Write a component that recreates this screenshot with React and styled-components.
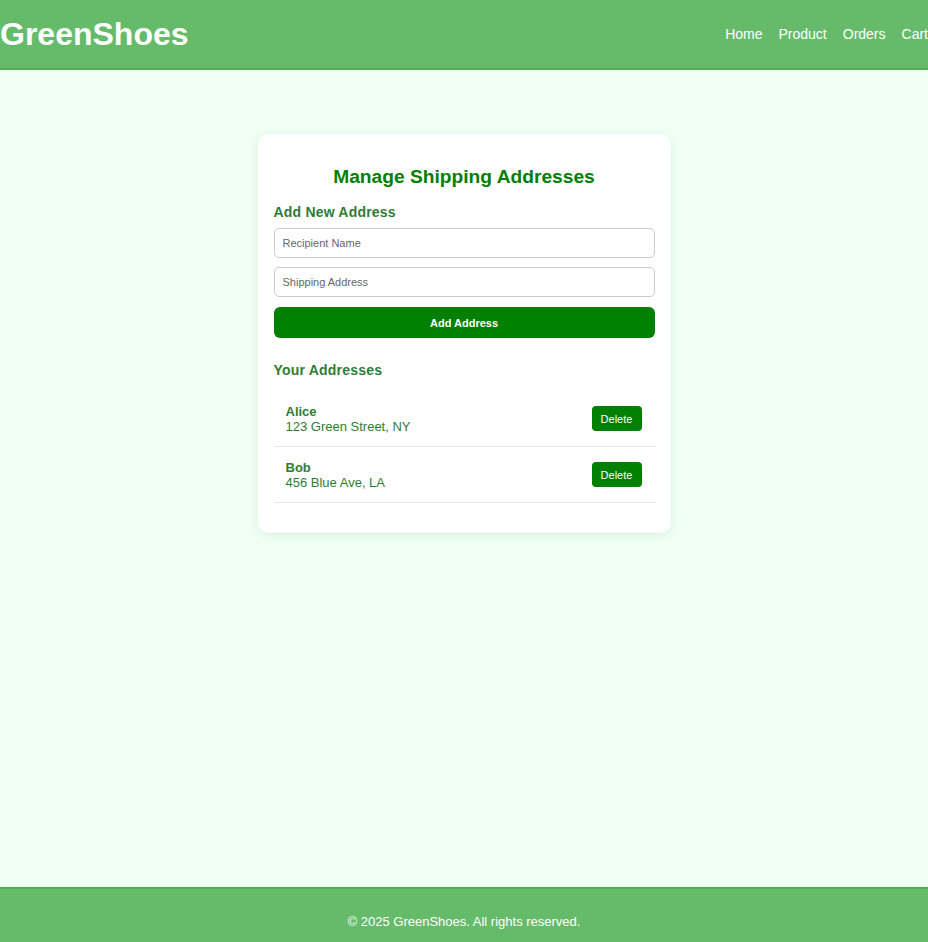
import React from "react";
import styled, { createGlobalStyle } from "styled-components";

const Global = createGlobalStyle`
  html, body { margin: 0; padding: 0; }
  body {
    background: #f0fff4;
    font-family: "Liberation Sans", Arial, sans-serif;
    overflow-x: hidden;
  }
  * { box-sizing: border-box; }
`;

const Header = styled.header`
  display: flex;
  align-items: center;
  justify-content: space-between;
  height: 70px;
  background: #66bb6a;
  border-bottom: 2px solid #4caf50;
`;

const Logo = styled.h1`
  margin: 0;
  color: #fff;
  font-size: 32px;
  font-weight: bold;
`;

const Nav = styled.nav`
  display: flex;
  gap: 16px;
  padding-bottom: 1px;
`;

const NavLink = styled.a`
  color: #fff;
  font-size: 14px;
  text-decoration: none;
`;

const Main = styled.main`
  min-height: 817px;
  display: flex;
  justify-content: center;
  padding-top: 64px;
`;

const Card = styled.section`
  width: 413px;
  align-self: flex-start;
  background: #fff;
  border-radius: 10px;
  box-shadow: 0 2px 10px rgba(0, 128, 0, 0.1);
  padding: 32px 16px 30px;
`;

const Title = styled.h2`
  margin: 0 0 16px;
  text-align: center;
  color: #008000;
  font-size: 19.2px;
  font-weight: bold;
`;

const SectionTitle = styled.h3`
  margin: 0 0 8px;
  color: #2e7d32;
  font-size: 14px;
  font-weight: bold;
  letter-spacing: 0.2px;
`;

const Form = styled.form`
  display: flex;
  flex-direction: column;
  gap: 9px;
  margin-bottom: 24px;
`;

const Input = styled.input`
  height: 30px;
  padding: 0 8px;
  border: 1px solid #ccc;
  border-radius: 5px;
  font-family: inherit;
  font-size: 11px;
  color: #333;
  &::placeholder { color: #666; }
`;

const PrimaryButton = styled.button`
  height: 31px;
  margin-top: 1px;
  border: none;
  border-radius: 6px;
  background: #008000;
  color: #fff;
  font-family: inherit;
  font-size: 11px;
  font-weight: bold;
`;

const List = styled.ul`
  list-style: none;
  margin: 13px 0 0;
  padding: 0;
`;

const Item = styled.li`
  display: flex;
  align-items: center;
  justify-content: space-between;
  height: 56px;
  padding: 0 13px 0 12px;
  border-bottom: 1px solid #e8e8e8;
`;

const Info = styled.div`
  color: #2e7d32;
  font-size: 13px;
  line-height: 15px;
`;

const Name = styled.div`
  font-weight: bold;
`;

const DeleteButton = styled.button`
  width: 50px;
  height: 25px;
  border: none;
  border-radius: 4px;
  background: #008000;
  color: #fff;
  font-family: inherit;
  font-size: 11px;
`;

const Footer = styled.footer`
  background: #66bb6a;
  border-top: 2px solid #4caf50;
  padding: 25px 0 24px;
  text-align: center;
  color: #fff;
  font-size: 13px;
`;

const addresses = [
  { name: "Alice", address: "123 Green Street, NY" },
  { name: "Bob", address: "456 Blue Ave, LA" },
];

export default function App() {
  return (
    <>
      <Global />
      <Header>
        <Logo>GreenShoes</Logo>
        <Nav>
          <NavLink href="#">Home</NavLink>
          <NavLink href="#">Product</NavLink>
          <NavLink href="#">Orders</NavLink>
          <NavLink href="#">Cart</NavLink>
        </Nav>
      </Header>
      <Main>
        <Card>
          <Title>Manage Shipping Addresses</Title>
          <SectionTitle>Add New Address</SectionTitle>
          <Form onSubmit={(e) => e.preventDefault()}>
            <Input placeholder="Recipient Name" />
            <Input placeholder="Shipping Address" />
            <PrimaryButton type="submit">Add Address</PrimaryButton>
          </Form>
          <SectionTitle>Your Addresses</SectionTitle>
          <List>
            {addresses.map((a) => (
              <Item key={a.name}>
                <Info>
                  <Name>{a.name}</Name>
                  <div>{a.address}</div>
                </Info>
                <DeleteButton>Delete</DeleteButton>
              </Item>
            ))}
          </List>
        </Card>
      </Main>
      <Footer>© 2025 GreenShoes. All rights reserved.</Footer>
    </>
  );
}
